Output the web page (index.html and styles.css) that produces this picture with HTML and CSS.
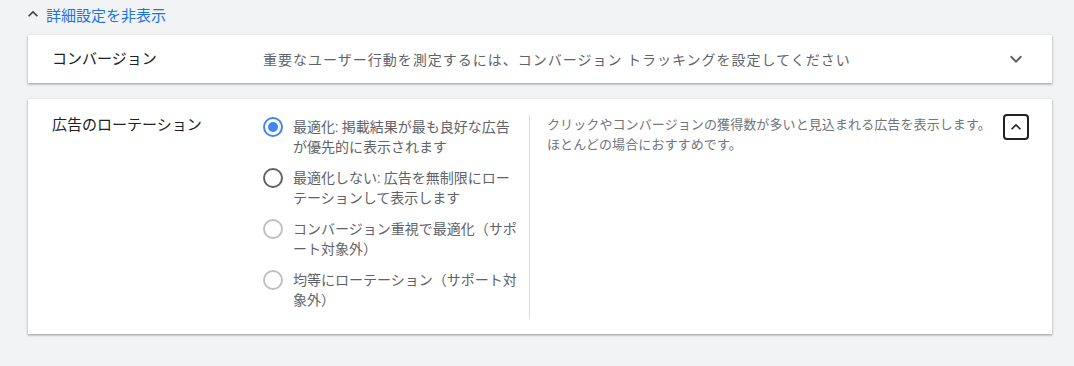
FILE: index.html
```html
<!DOCTYPE html>
<html lang="ja">
<head>
  <meta charset="UTF-8" />
  <title>詳細設定</title>
  <link rel="stylesheet" href="styles.css">
</head>
<body>
  <div class="settings">
    <button class="toggle-link" type="button">
      <svg viewBox="0 0 24 24" width="20" height="20"><path d="M12 8l-6 6 1.41 1.41L12 10.83l4.59 4.58L18 14z"/></svg>
      詳細設定を非表示
    </button>

    <section class="card card-closed">
      <div class="card-title">コンバージョン</div>
      <div class="summary">重要なユーザー行動を測定するには、コンバージョン トラッキングを設定してください</div>
      <span class="expand-icon">
        <svg viewBox="0 0 24 24" width="24" height="24"><path d="M16.59 8.59L12 13.17 7.41 8.59 6 10l6 6 6-6z"/></svg>
      </span>
    </section>

    <section class="card card-open">
      <div class="card-title">広告のローテーション</div>

      <div class="options">
        <label class="option">
          <span class="radio checked"></span>
          <span class="option-text">最適化: 掲載結果が最も良好な広告<br>が優先的に表示されます</span>
        </label>
        <label class="option">
          <span class="radio"></span>
          <span class="option-text">最適化しない: 広告を無制限にロー<br>テーションして表示します</span>
        </label>
        <label class="option">
          <span class="radio disabled"></span>
          <span class="option-text">コンバージョン重視で最適化（サポ<br>ート対象外）</span>
        </label>
        <label class="option">
          <span class="radio disabled"></span>
          <span class="option-text">均等にローテーション（サポート対<br>象外）</span>
        </label>
      </div>

      <div class="help">
        クリックやコンバージョンの獲得数が多いと見込まれる広告を表示します。<br>
        ほとんどの場合におすすめです。
      </div>

      <button class="collapse" type="button">
        <svg viewBox="0 0 24 24" width="20" height="20"><path d="M12 8l-6 6 1.41 1.41L12 10.83l4.59 4.58L18 14z"/></svg>
      </button>
    </section>
  </div>
</body>
</html>
```

FILE: styles.css
```css
* {
  box-sizing: border-box;
}

body {
  margin: 0;
  background: #f1f3f4;
  font-family: Roboto, "Noto Sans CJK JP", sans-serif;
  color: #202124;
}

.settings {
  padding: 4px 22px 0 28px;
}

.toggle-link {
  display: flex;
  align-items: center;
  gap: 3px;
  height: 20px;
  margin: 0 0 11px -5px;
  padding: 0;
  border: none;
  background: none;
  font-family: inherit;
  font-size: 15px;
  color: #1a73e8;
  cursor: pointer;
}

.toggle-link svg {
  fill: #3c4043;
}

.card {
  background: #ffffff;
  box-shadow: 0 1px 2px rgba(0, 0, 0, 0.3), 0 1px 3px 1px rgba(0, 0, 0, 0.08);
  margin-bottom: 16px;
}

.card-title {
  width: 211px;
  flex-shrink: 0;
  font-size: 15px;
  line-height: 20px;
  color: #202124;
}

.card-closed {
  display: flex;
  align-items: center;
  height: 48px;
  padding: 0 24px;
}

.summary {
  flex: 1;
  font-size: 14px;
  letter-spacing: 1px;
  color: #5f6368;
  white-space: nowrap;
}

.expand-icon {
  display: flex;
}

.expand-icon svg {
  fill: #5f6368;
}

.card-open {
  display: flex;
  align-items: flex-start;
  padding: 16px 23px 15px 24px;
}

.options {
  width: 267px;
  flex-shrink: 0;
  padding: 2px 0 9px;
  border-right: 1px solid #dadce0;
}

.option {
  display: flex;
  gap: 10px;
  margin-bottom: 11px;
  font-size: 14px;
  line-height: 20px;
  color: #5f6368;
}

.option:last-child {
  margin-bottom: 0;
}

.radio {
  width: 20px;
  height: 20px;
  flex-shrink: 0;
  border: 2px solid #5f6368;
  border-radius: 50%;
  display: flex;
  align-items: center;
  justify-content: center;
}

.radio.checked {
  border-color: #4285f4;
}

.radio.checked::after {
  content: "";
  width: 10px;
  height: 10px;
  border-radius: 50%;
  background: #4285f4;
}

.radio.disabled {
  border-color: #bdc1c6;
}

.help {
  flex: 1;
  padding: 0 8px 0 17px;
  font-size: 13px;
  letter-spacing: 0.1px;
  line-height: 20px;
  color: #70757a;
  white-space: nowrap;
}

.collapse {
  width: 26px;
  height: 26px;
  padding: 0;
  margin-top: -1px;
  border: 2px solid #202124;
  border-radius: 4px;
  background: #ffffff;
  display: flex;
  align-items: center;
  justify-content: center;
  cursor: pointer;
}

.collapse svg {
  fill: #202124;
}
```
